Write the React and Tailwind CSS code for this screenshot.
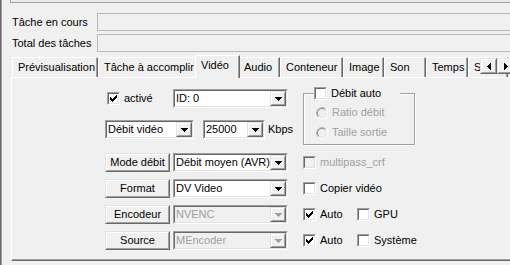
import React from "react";

const sunkenOuter = "border border-t-[#a0a0a0] border-l-[#a0a0a0] border-r-white border-b-white";
const sunkenInner = "border border-t-[#696969] border-l-[#696969] border-r-[#e3e3e3] border-b-[#e3e3e3]";
const raisedOuter = "border border-t-[#e3e3e3] border-l-[#e3e3e3] border-r-[#696969] border-b-[#696969]";
const raisedInner = "border border-t-white border-l-white border-r-[#a0a0a0] border-b-[#a0a0a0]";

function DownArrow({ disabled }) {
  return (
    <svg width="7" height="4" viewBox="0 0 7 4" shapeRendering="crispEdges">
      <path d="M0 0h7l-3 4h-1z" fill={disabled ? "#a0a0a0" : "#000"} />
    </svg>
  );
}

function Combo({ value, w, disabled }) {
  return (
    <div className={`${sunkenOuter} ${w} h-[19px] flex shrink-0`}>
      <div className={`${sunkenInner} flex-1 flex min-w-0 ${disabled ? "bg-[#f0f0f0] text-[#a0a0a0]" : "bg-white"}`}>
        <span className="flex-1 pl-[1px] leading-[15px] whitespace-nowrap overflow-hidden">{value}</span>
        <div className={`${raisedOuter} w-[16px] h-full flex bg-[#f0f0f0]`}>
          <div className={`${raisedInner} flex-1 flex items-center justify-center`}>
            <DownArrow disabled={disabled} />
          </div>
        </div>
      </div>
    </div>
  );
}

function Button({ label }) {
  return (
    <div className={`${raisedOuter} w-[65px] h-[19px] flex shrink-0 bg-[#f0f0f0]`}>
      <div className={`${raisedInner} flex-1 flex items-center justify-center leading-[13px]`}>{label}</div>
    </div>
  );
}

function Check({ checked, disabled }) {
  return (
    <span className={`${sunkenOuter} w-[13px] h-[13px] flex shrink-0`}>
      <span className={`${sunkenInner} flex-1 flex items-center justify-center ${disabled ? "bg-[#f0f0f0]" : "bg-white"}`}>
        {checked && (
          <svg width="7" height="7" viewBox="0 0 7 7" shapeRendering="crispEdges">
            <path d="M0 2v3l2 2l5-5v-3l-5 5z" fill="#000" />
          </svg>
        )}
      </span>
    </span>
  );
}

function Radio() {
  return (
    <svg width="12" height="12" viewBox="0 0 12 12" className="shrink-0">
      <circle cx="6" cy="6" r="5" fill="#f0f0f0" />
      <path d="M9.9 2.1A5.5 5.5 0 0 0 2.1 9.9" stroke="#b4b4b4" fill="none" />
      <path d="M2.1 9.9A5.5 5.5 0 0 0 9.9 2.1" stroke="#ffffff" fill="none" />
      <path d="M9.2 2.8A4.5 4.5 0 0 0 2.8 9.2" stroke="#8a8a8a" fill="none" />
      <path d="M2.8 9.2A4.5 4.5 0 0 0 9.2 2.8" stroke="#e3e3e3" fill="none" />
    </svg>
  );
}

function CheckLabel({ label, checked, disabled, className = "" }) {
  return (
    <div className={`flex items-center ${className}`}>
      <Check checked={checked} disabled={disabled} />
      <span className={`ml-[4px] leading-[13px] whitespace-nowrap ${disabled ? "text-[#a0a0a0]" : ""}`}>{label}</span>
    </div>
  );
}

const tabs = [
  { label: "Prévisualisation", w: "w-[86px]" },
  { label: "Tâche à accomplir", w: "w-[99px]" },
  { label: "Vidéo", w: "w-[45px]", active: true },
  { label: "Audio", w: "w-[42px]" },
  { label: "Conteneur", w: "w-[63px]" },
  { label: "Image", w: "w-[41px]" },
  { label: "Son", w: "w-[42px]" },
  { label: "Temps", w: "w-[42px]" },
  { label: "Son", w: "w-[40px]" },
];

export default function App() {
  return (
    <div className="relative w-[510px] h-[265px] overflow-hidden bg-[#f0f0f0] text-[11px] text-black font-['Liberation_Sans',Arial,sans-serif] shadow-[inset_1px_0_0_#696969,inset_2px_0_0_#a0a0a0]">
      {/* bottom edge of the control above */}
      <div className="ml-[10px] h-[3px] border-l border-b border-l-[#a0a0a0] border-b-[#a0a0a0] bg-[#e9e9e9]" />

      {/* progress fields */}
      <div className="mt-[10px] h-[18px] flex items-center">
        <span className="w-[97px] pl-[12px] shrink-0">Tâche en cours</span>
        <div className="flex-1 -mr-[4px] h-full border border-[#b9b9b9]" />
      </div>
      <div className="mt-[3px] h-[18px] flex items-center">
        <span className="w-[97px] pl-[12px] shrink-0">Total des tâches</span>
        <div className="flex-1 -mr-[4px] h-full border border-[#b9b9b9]" />
      </div>

      {/* tab strip */}
      <div className="relative mt-[3px] h-[22px] flex items-end pl-[12px]">
        {tabs.map((t, i) =>
          t.active ? (
            <div
              key={i}
              className={`relative z-10 -mx-[2px] -mb-px h-[23px] ${t.w} shrink-0 pt-[3px] pl-[5px] leading-[13px] bg-[#f0f0f0] border-t border-l border-r border-t-white border-l-white border-r-[#696969] shadow-[inset_-1px_0_0_#a0a0a0]`}
            >
              {t.label}
            </div>
          ) : (
            <div
              key={i}
              className={`h-[20px] ${t.w} shrink-0 flex items-center pl-[5px] whitespace-nowrap overflow-hidden border-t border-l border-r border-t-white border-l-white border-r-[#696969] shadow-[inset_-1px_0_0_#a0a0a0]`}
            >
              {t.label}
            </div>
          )
        )}
        {/* tab scroll buttons */}
        <div className="absolute left-[480px] top-[3px] flex z-20">
          <div className={`${raisedOuter} w-[17px] h-[16px] flex bg-[#f0f0f0]`}>
            <div className={`${raisedInner} flex-1 flex items-center justify-center`}>
              <svg width="4" height="7" viewBox="0 0 4 7" shapeRendering="crispEdges">
                <path d="M4 0v7L0 4v-1z" fill="#000" />
              </svg>
            </div>
          </div>
          <div className={`${raisedOuter} w-[17px] h-[16px] flex bg-[#f0f0f0]`}>
            <div className={`${raisedInner} flex-1 flex items-center justify-center`}>
              <svg width="4" height="7" viewBox="0 0 4 7" shapeRendering="crispEdges">
                <path d="M0 0v7l4-3v-1z" fill="#000" />
              </svg>
            </div>
          </div>
        </div>
      </div>

      {/* tab page */}
      <div className="ml-[11px] w-[510px] h-[184px] border-t border-l border-b border-t-white border-l-white border-b-[#696969] shadow-[inset_0_-1px_0_#a0a0a0] pl-[93px] pt-[11px]">
        <div className="flex h-[56px]">
          <div className="w-[183px] flex flex-col shrink-0">
            <div className="h-[19px] flex items-center">
              <CheckLabel label="activé" checked className="ml-[2px]" />
              <div className="ml-auto">
                <Combo value="ID: 0" w="w-[115px]" />
              </div>
            </div>
            <div className="mt-[12px] h-[19px] flex items-center">
              <Combo value="Débit vidéo" w="w-[89px]" />
              <div className="ml-[9px]">
                <Combo value="25000" w="w-[62px]" />
              </div>
              <span className="ml-[3px]">Kbps</span>
            </div>
          </div>

          <div className="ml-[15px] relative mt-[4px] w-[112px] h-[52px] border border-[#a0a0a0] shadow-[inset_1px_1px_0_#fff,1px_1px_0_#fff] pl-[12px] pt-[12px]">
            <div className="absolute left-[10px] -top-[7px] w-[86px] bg-[#f0f0f0] flex items-center">
              <CheckLabel label="Débit auto" />
            </div>
            <div className="h-[13px] flex items-center text-[#a0a0a0]">
              <Radio />
              <span className="ml-[4px]">Ratio débit</span>
            </div>
            <div className="mt-[7px] h-[13px] flex items-center text-[#a0a0a0]">
              <Radio />
              <span className="ml-[4px]">Taille sortie</span>
            </div>
          </div>
        </div>

        <div className="mt-[8px] h-[19px] flex items-center">
          <div className="w-[183px] flex gap-[3px] shrink-0">
            <Button label="Mode débit" />
            <Combo value="Débit moyen (AVR)" w="w-[115px]" />
          </div>
          <CheckLabel label="multipass_crf" disabled className="ml-[15px]" />
        </div>

        <div className="mt-[7px] h-[19px] flex items-center">
          <div className="w-[183px] flex gap-[3px] shrink-0">
            <Button label="Format" />
            <Combo value="DV Video" w="w-[115px]" />
          </div>
          <CheckLabel label="Copier vidéo" className="ml-[15px]" />
        </div>

        <div className="mt-[7px] h-[19px] flex items-center">
          <div className="w-[183px] flex gap-[3px] shrink-0">
            <Button label="Encodeur" />
            <Combo value="NVENC" w="w-[115px]" disabled />
          </div>
          <CheckLabel label="Auto" checked className="ml-[15px] w-[54px]" />
          <CheckLabel label="GPU" />
        </div>

        <div className="mt-[7px] h-[19px] flex items-center">
          <div className="w-[183px] flex gap-[3px] shrink-0">
            <Button label="Source" />
            <Combo value="MEncoder" w="w-[115px]" disabled />
          </div>
          <CheckLabel label="Auto" checked className="ml-[15px] w-[54px]" />
          <CheckLabel label="Système" />
        </div>
      </div>
    </div>
  );
}
